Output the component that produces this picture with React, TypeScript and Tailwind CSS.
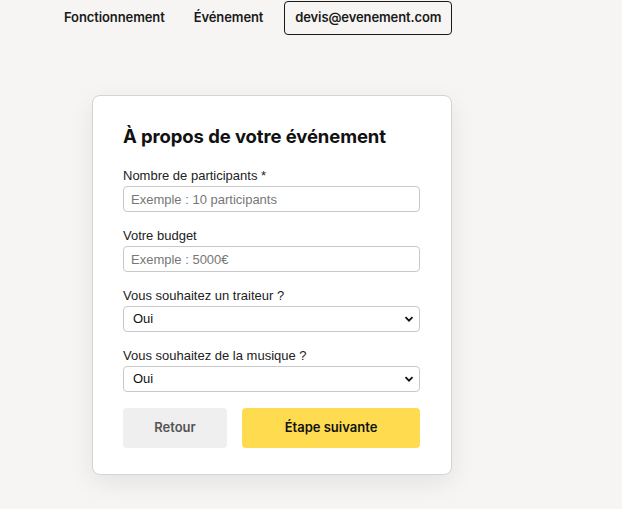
import React from "react";

const Chevron = () => (
  <svg
    className="pointer-events-none absolute right-[6px] top-1/2 -translate-y-1/2"
    width="10"
    height="10"
    viewBox="0 0 10 10"
  >
    <path d="M1.5 3.2 L5 6.7 L8.5 3.2" fill="none" stroke="#111" strokeWidth="1.8" />
  </svg>
);

const Field = ({ label, children }: { label: string; children: React.ReactNode }) => (
  <div className="flex flex-col gap-[3px]">
    <label className="text-[13px] leading-[15px] text-[#222]">{label}</label>
    {children}
  </div>
);

const TextInput = ({ placeholder }: { placeholder: string }) => (
  <input
    placeholder={placeholder}
    className="h-[26px] w-full rounded-[4px] border border-[#c9c9c9] bg-white px-[7px] text-[13px] text-[#222] placeholder:text-[#777] outline-none"
  />
);

const Select = () => (
  <div className="relative">
    <select className="h-[26px] w-full appearance-none rounded-[4px] border border-[#c9c9c9] bg-white px-[9px] text-[13px] text-[#111] outline-none">
      <option>Oui</option>
      <option>Non</option>
    </select>
    <Chevron />
  </div>
);

export default function App() {
  return (
    <div className="min-h-[509px] bg-[#f6f5f3] font-['Liberation_Sans',Arial,sans-serif]">
      {/* NAV */}
      <nav className="flex items-center pl-[64px] pt-[1px] font-['Inter',sans-serif] text-[13px] font-semibold tracking-[-0.1px] text-[#1a1a1a]">
        <a>Fonctionnement</a>
        <a className="ml-[29px]">Événement</a>
        <a className="ml-[21px] flex h-[34px] w-[168px] items-center justify-center rounded-[4px] border border-[#1a1a1a]">
          devis@evenement.com
        </a>
      </nav>

      {/* CARD */}
      <div className="ml-[92px] mt-[60px] w-[360px] rounded-[8px] border border-[#d4d4d4] bg-white pl-[30px] pr-[31px] pb-[26px] pt-[28px] shadow-[0_8px_24px_rgba(0,0,0,0.08)]">
        <h2 className="font-['Inter',sans-serif] text-[18.5px] font-bold leading-[24px] tracking-[-0.1px] text-[#111]">
          À propos de votre événement
        </h2>
        <div className="mt-[20px] flex flex-col gap-[16px]">
          <Field label="Nombre de participants *">
            <TextInput placeholder="Exemple : 10 participants" />
          </Field>
          <Field label="Votre budget">
            <TextInput placeholder="Exemple : 5000€" />
          </Field>
          <Field label="Vous souhaitez un traiteur ?">
            <Select />
          </Field>
          <Field label="Vous souhaitez de la musique ?">
            <Select />
          </Field>
        </div>
        <div className="mt-[16px] flex gap-[15px]">
          <button className="h-[40px] w-[104px] rounded-[4px] bg-[#efefef] font-['Inter',sans-serif] text-[13px] font-semibold text-[#555]">
            Retour
          </button>
          <button className="h-[40px] flex-1 rounded-[4px] bg-[#ffdc4f] font-['Inter',sans-serif] text-[13px] font-semibold text-[#111]">
            Étape suivante
          </button>
        </div>
      </div>
    </div>
  );
}
